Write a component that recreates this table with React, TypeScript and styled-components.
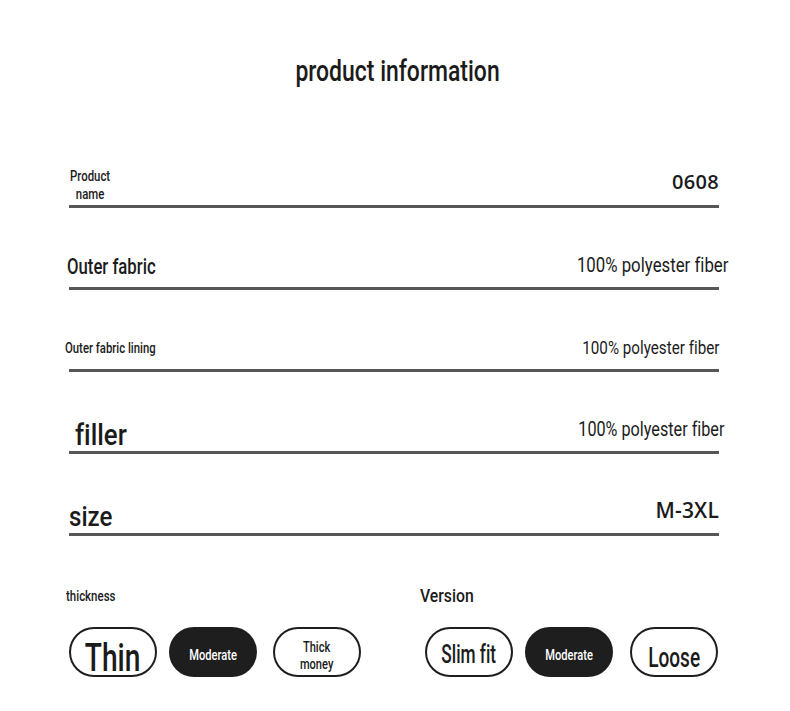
import React from "react";
import styled, { createGlobalStyle } from "styled-components";

const Global = createGlobalStyle`
  html, body { margin: 0; padding: 0; background: #ffffff; }
  body { font-family: Roboto, "Liberation Sans", sans-serif; color: #1b1b1b; }
`;

const Page = styled.div`
  width: 790px;
  height: 711px;
  overflow: hidden;
  background: #ffffff;
`;

type TxtProps = {
  $size: number;
  $lh: number;
  $w?: number;
  $sx?: number;
  $origin?: "left" | "right" | "center";
  $font?: string;
  $ls?: number;
  $mb?: number;
  $ml?: number;
  $mr?: number;
  $color?: string;
};

const Txt = styled.span<TxtProps>`
  display: inline-block;
  white-space: nowrap;
  text-align: center;
  font-variant-ligatures: none;
  font-family: ${(p) => p.$font ?? "Roboto"}, "Liberation Sans", sans-serif;
  font-size: ${(p) => p.$size}px;
  line-height: ${(p) => p.$lh}px;
  font-weight: ${(p) => p.$w ?? 500};
  letter-spacing: ${(p) => p.$ls ?? 0}px;
  color: ${(p) => p.$color ?? "#1b1b1b"};
  transform: scaleX(${(p) => p.$sx ?? 1});
  transform-origin: ${(p) => p.$origin ?? "center"} center;
  margin: 0 ${(p) => p.$mr ?? 0}px ${(p) => p.$mb ?? 0}px ${(p) => p.$ml ?? 0}px;
`;

const Header = styled.header`
  padding-top: 53px;
  text-align: center;
`;

const Table = styled.section`
  margin: 37px 0 0 69px;
  width: 650px;
`;

const Row = styled.div`
  display: flex;
  justify-content: space-between;
  align-items: flex-end;
  height: 82px;
  box-sizing: border-box;
  border-bottom: 3px solid #565656;
`;

const Options = styled.section`
  margin-top: 48px;
  padding-left: 66px;
  display: grid;
  grid-template-columns: 354px auto;
`;

const Group = styled.div`
  display: flex;
  flex-direction: column;
`;

const GroupLabel = styled.div`
  height: 24px;
  display: flex;
  align-items: flex-start;
`;

const PillRow = styled.div<{ $pad: number }>`
  display: flex;
  gap: 12px;
  margin-top: 19px;
  padding-left: ${(p) => p.$pad}px;
`;

const Pill = styled.div<{ $dark?: boolean; $pt?: number; $push?: number }>`
  width: 88px;
  height: 50px;
  box-sizing: border-box;
  border-radius: 25px;
  border: 2px solid #1e1e1e;
  background: ${(p) => (p.$dark ? "#1e1e1e" : "#ffffff")};
  display: flex;
  align-items: center;
  justify-content: center;
  padding-top: ${(p) => p.$pt ?? 0}px;
  margin-left: ${(p) => p.$push ?? 0}px;
  overflow: visible;
`;

export default function App() {
  return (
    <Page>
      <Global />
      <Header>
        <Txt $size={30} $lh={36} $w={500} $sx={0.765} $ml={6}>
          product information
        </Txt>
      </Header>

      <Table>
        <Row>
          <Txt $size={15} $lh={18} $w={500} $sx={0.76} $origin="left" $ml={1} $mb={2}>
            Product
            <br />
            name
          </Txt>
          <Txt $font="Open Sans" $size={20} $lh={22} $w={600} $ls={0.3} $mb={12}>
            0608
          </Txt>
        </Row>
        <Row>
          <Txt $size={22} $lh={26} $w={500} $sx={0.76} $origin="left" $ml={-2} $mb={7}>
            Outer fabric
          </Txt>
          <Txt $size={21} $lh={24} $w={400} $sx={0.8} $origin="right" $mr={-9} $mb={10}>
            100% polyester fiber
          </Txt>
        </Row>
        <Row>
          <Txt $size={14} $lh={18} $w={500} $sx={0.81} $origin="left" $ml={-4} $mb={12}>
            Outer fabric lining
          </Txt>
          <Txt $size={19} $lh={24} $w={400} $sx={0.8} $origin="right" $mr={0} $mb={9}>
            100% polyester fiber
          </Txt>
        </Row>
        <Row>
          <Txt $size={30} $lh={32} $w={500} $sx={0.86} $origin="left" $ml={6} $mb={0}>
            filler
          </Txt>
          <Txt $size={20} $lh={24} $w={400} $sx={0.81} $origin="right" $mr={-5} $mb={10}>
            100% polyester fiber
          </Txt>
        </Row>
        <Row>
          <Txt $size={28} $lh={32} $w={500} $sx={0.86} $origin="left" $ml={0} $mb={0}>
            size
          </Txt>
          <Txt $font="Open Sans" $size={21} $lh={24} $w={600} $ls={0.2} $mb={11}>
            M-3XL
          </Txt>
        </Row>
      </Table>

      <Options>
        <Group>
          <GroupLabel>
            <Txt $size={14} $lh={24} $w={500} $sx={0.82} $origin="left">
              thickness
            </Txt>
          </GroupLabel>
          <PillRow $pad={3}>
            <Pill $pt={12}>
              <Txt $size={38} $lh={38} $w={500} $sx={0.74}>
                Thin
              </Txt>
            </Pill>
            <Pill $dark $pt={6}>
              <Txt $size={15} $lh={18} $w={500} $sx={0.74} $color="#ffffff">
                Moderate
              </Txt>
            </Pill>
            <Pill $pt={7} $push={4}>
              <Txt $size={15} $lh={17} $w={500} $sx={0.74}>
                Thick
                <br />
                money
              </Txt>
            </Pill>
          </PillRow>
        </Group>
        <Group>
          <GroupLabel>
            <Txt $size={19} $lh={24} $w={500} $sx={0.83} $origin="left">
              Version
            </Txt>
          </GroupLabel>
          <PillRow $pad={5}>
            <Pill $pt={5}>
              <Txt $size={25} $lh={28} $w={500} $sx={0.69}>
                Slim fit
              </Txt>
            </Pill>
            <Pill $dark $pt={6}>
              <Txt $size={15} $lh={18} $w={500} $sx={0.74} $color="#ffffff">
                Moderate
              </Txt>
            </Pill>
            <Pill $pt={11} $push={5}>
              <Txt $size={28} $lh={30} $w={500} $sx={0.68}>
                Loose
              </Txt>
            </Pill>
          </PillRow>
        </Group>
      </Options>
    </Page>
  );
}
